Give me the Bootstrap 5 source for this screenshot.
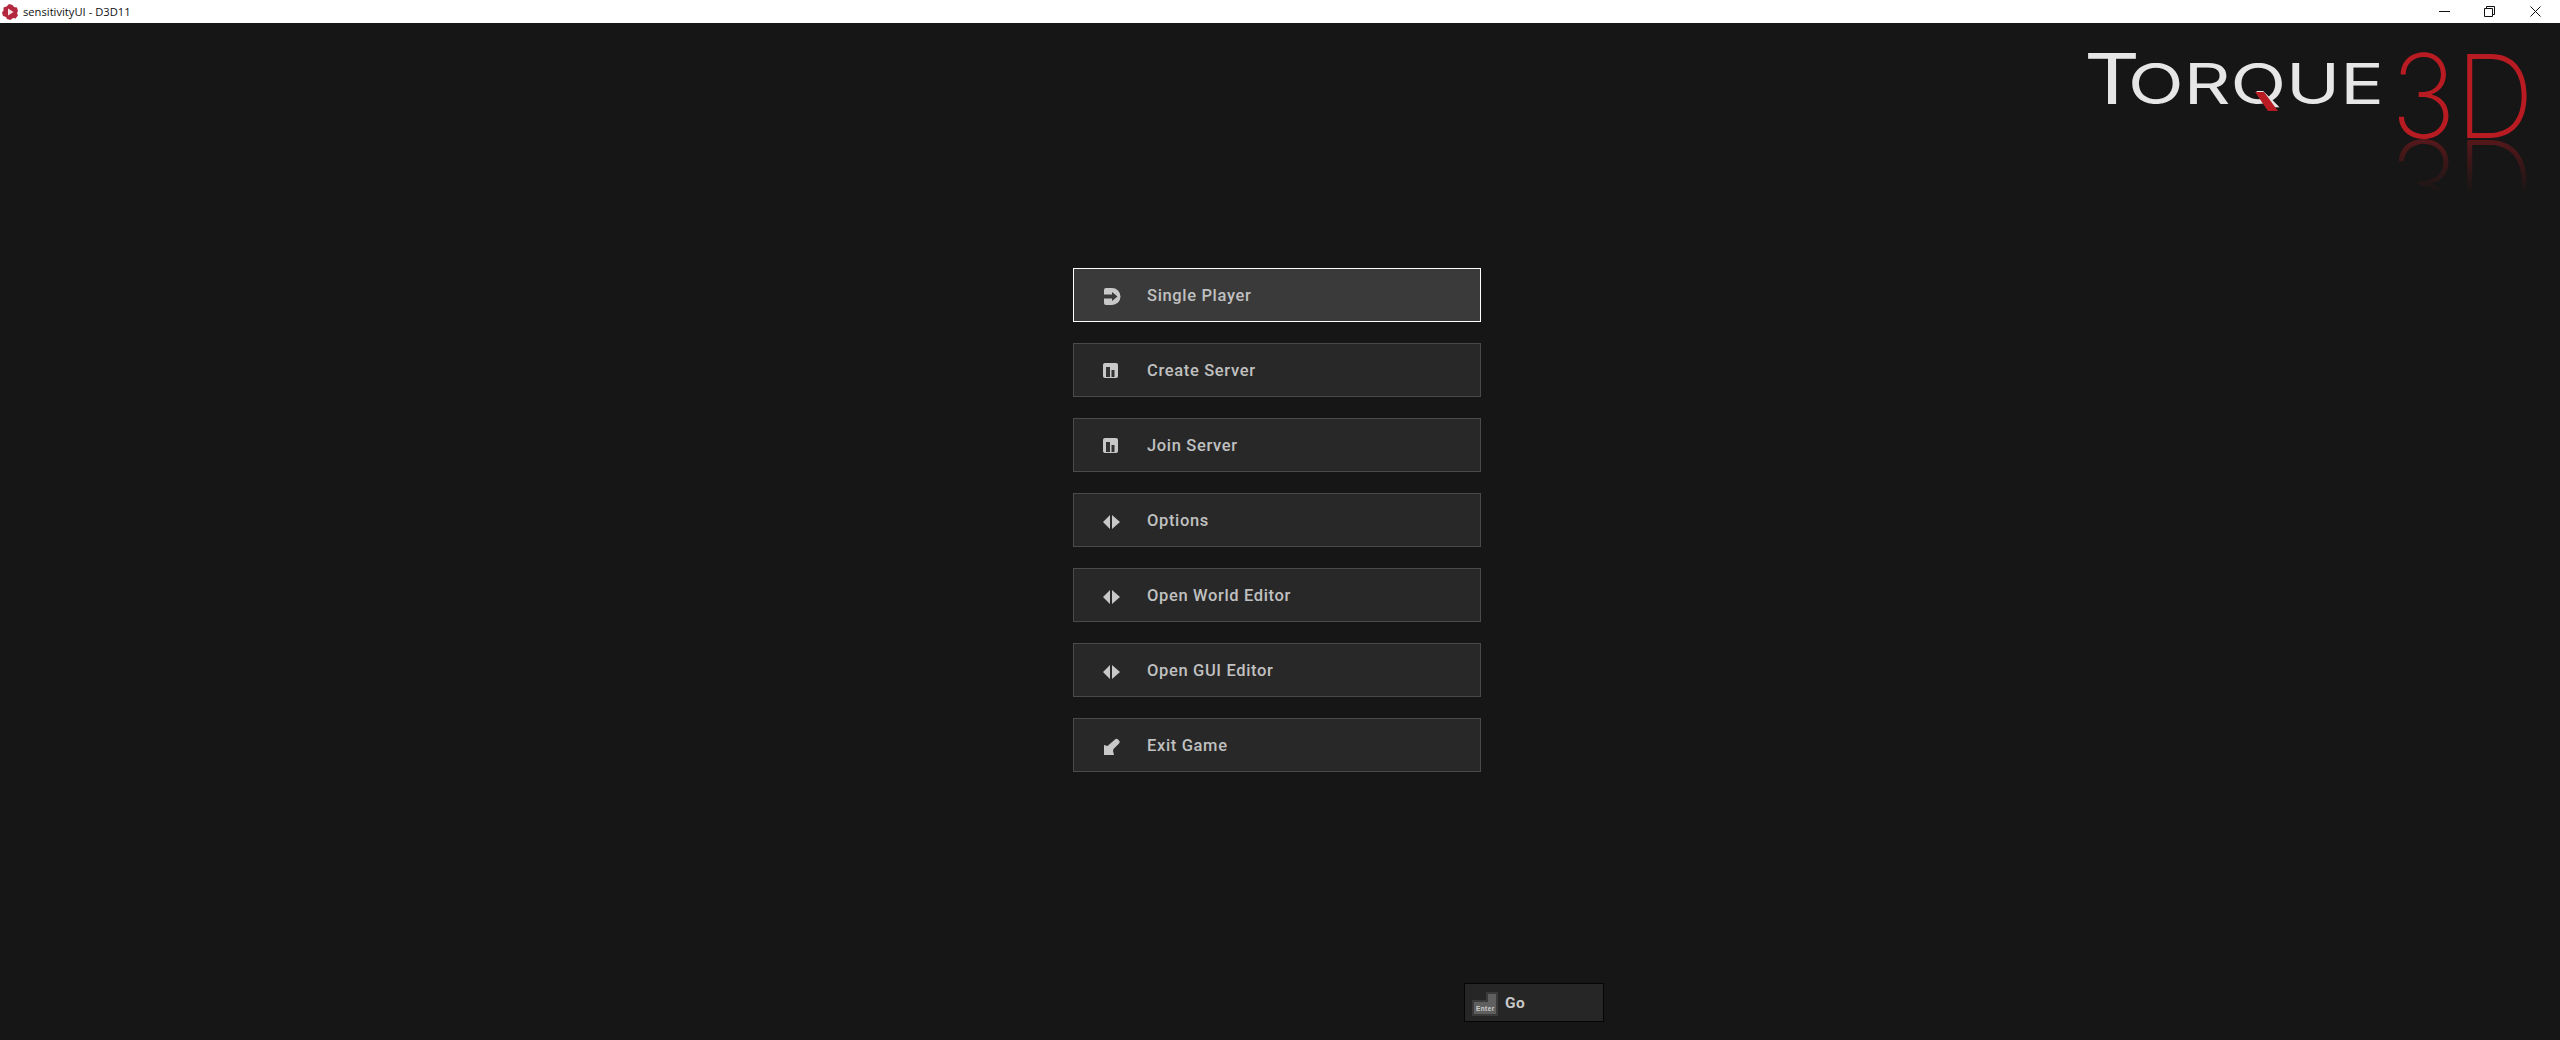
<!DOCTYPE html>
<html lang="en">
<head>
<meta charset="utf-8">
<title>sensitivityUI - D3D11</title>
<link href="https://cdn.jsdelivr.net/npm/bootstrap@5.3.0/dist/css/bootstrap.min.css" rel="stylesheet">
<style>
html,body{height:100%}
body{background:#161616;overflow:hidden;font-family:"Liberation Sans",Arial,sans-serif}
.win-bar{height:23px;background:#fff;color:#111;font:11.2px/23px "Open Sans","Liberation Sans",sans-serif;padding:0 2px}
.win-title{margin-left:4px;margin-top:-1px}
.win-ctl{width:45.5px;height:23px}
.stage{height:1017px}
.logo-art{position:absolute;top:0;right:0;padding-right:19px}
.logo-word{display:block;width:310px;height:110px}
.logo-num{display:block;width:150px;height:116px;margin-left:1px;overflow:visible;-webkit-box-reflect:below 0 linear-gradient(transparent 52%,rgba(255,255,255,.4))}
.menu-col{width:408px;margin-left:1073px;padding-top:245px;gap:21px}
.menu-btn.btn{height:54px;width:408px;background:#282828;border:1px solid #4a4a4a;border-radius:0;color:#c0c0c0;padding:2px 0 0 29px;font:500 16.5px/1 Roboto,"Liberation Sans",sans-serif;letter-spacing:.65px;text-align:left}
.menu-btn.btn.is-active{background:#3a3a3a;border-color:#fff}
.menu-ico{width:20px;height:20px;margin:2px 24px 0 0;flex:none}
.go-wrap{padding-left:1464px;padding-bottom:18px}
.go-btn.btn{width:140px;height:39px;background:#262626;border:1px solid #050505;border-radius:0;color:#c8c8c8;padding:2px 0 0 6px;font:700 15.5px/1 Roboto,"Liberation Sans",sans-serif;letter-spacing:.5px}
.key-ico{width:28px;height:26px;margin-right:6px;flex:none}
.key-lbl{font:700 6.5px "Liberation Sans",sans-serif;fill:#cfcfcf;letter-spacing:.4px}
.lg-torque{font-family:Inter,"Liberation Sans",sans-serif;font-weight:400;fill:#e6e6e6}
.lg-3d{font-family:Inter,"Liberation Sans",sans-serif;font-weight:240;fill:#b81c22}
</style>
</head>
<body class="d-flex flex-column">
<header class="win-bar d-flex align-items-center">
  <svg width="17" height="16" viewBox="0 0 17 16"><path d="M7 0l3.500 1 1.500 2 3 .5 1 3.500-1 2 1 2.500-2.500 3-2.500-.5-2.500 2-3.500-1-1-2-3-1L0 8.500 1.500 6.500 1.500 3.500 4.500 2.500z" fill="#b4283f"/><path d="M6 4.500l5.500 3.500-5.500 3.500z" fill="#f3e3e6"/></svg>
  <span class="win-title">sensitivityUI - D3D11</span>
  <div class="d-flex ms-auto">
    <div class="win-ctl d-flex align-items-center justify-content-center"><svg width="11" height="11" viewBox="0 0 11 11"><path d="M0 5.500h11" stroke="#111"/></svg></div>
    <div class="win-ctl d-flex align-items-center justify-content-center"><svg width="11" height="11" viewBox="0 0 11 11" fill="none" stroke="#111"><path d="M.5 2.500h8v8h-8z"/><path d="M2.500 2.500v-2h8v8h-2"/></svg></div>
    <div class="win-ctl d-flex align-items-center justify-content-center"><svg width="11" height="11" viewBox="0 0 11 11"><path d="M.5.500l10 10M10.500.500l-10 10" stroke="#111"/></svg></div>
  </div>
</header>
<main class="stage position-relative d-flex flex-column">
  <div class="logo-art d-flex">
    <svg class="logo-word" viewBox="-10 0 310 110">
      <text class="lg-torque" x="-6" y="81" font-size="70" textLength="56" lengthAdjust="spacingAndGlyphs">T</text>
      <text class="lg-torque" x="38" y="81" font-size="56" textLength="256" lengthAdjust="spacingAndGlyphs">ORQUE</text>
      <polygon points="165,69 174,69 188,88 178,88" fill="#b81c22"/>
    </svg>
    <svg class="logo-num" viewBox="0 0 150 116">
      <text class="lg-3d" x="0" y="115" font-size="116" textLength="143" lengthAdjust="spacingAndGlyphs">3D</text>
    </svg>
  </div>
  <nav class="menu-col d-flex flex-column">
    <button class="menu-btn is-active btn d-flex align-items-center"><svg class="menu-ico" viewBox="0 0 20 20"><path d="M3 1h6a8.500 8.500 0 0 1 0 17H3a2 2 0 0 1-2-2V3a2 2 0 0 1 2-2z" fill="#c8c8c8"/><path d="M0 7.500h9V5l5.500 4.500L9 14v-2.500H0z" fill="#3a3a3a"/></svg>Single Player</button>
    <button class="menu-btn btn d-flex align-items-center"><svg class="menu-ico" viewBox="0 0 20 20"><rect y="1" width="15" height="15" rx="2" fill="#c8c8c8"/><path d="M3 5h4v10H3zM8.500 8h3v7h-3z" fill="#333"/></svg>Create Server</button>
    <button class="menu-btn btn d-flex align-items-center"><svg class="menu-ico" viewBox="0 0 20 20"><rect y="1" width="15" height="15" rx="2" fill="#c8c8c8"/><path d="M3 5h4v10H3zM8.500 8h3v7h-3z" fill="#333"/></svg>Join Server</button>
    <button class="menu-btn btn d-flex align-items-center"><svg class="menu-ico" viewBox="0 0 20 20"><path d="M7 3v14L0 10zM9 3v14l8-7z" fill="#c8c8c8"/></svg>Options</button>
    <button class="menu-btn btn d-flex align-items-center"><svg class="menu-ico" viewBox="0 0 20 20"><path d="M7 3v14L0 10zM9 3v14l8-7z" fill="#c8c8c8"/></svg>Open World Editor</button>
    <button class="menu-btn btn d-flex align-items-center"><svg class="menu-ico" viewBox="0 0 20 20"><path d="M7 3v14L0 10zM9 3v14l8-7z" fill="#c8c8c8"/></svg>Open GUI Editor</button>
    <button class="menu-btn btn d-flex align-items-center"><svg class="menu-ico" viewBox="0 0 20 20"><path d="M12 2.500a2 2 0 0 1 3 0l1 1a2 2 0 0 1 0 3L10.500 12l-.5 2 1 4H1V8l3.500 1z" fill="#c8c8c8"/></svg>Exit Game</button>
  </nav>
  <footer class="go-wrap mt-auto">
    <button class="go-btn btn d-flex align-items-center"><svg class="key-ico" viewBox="0 0 28 26"><path d="M15 1h12v24H1V9h14z" fill="#3a3a3a"/><path d="M17 3h8v20H3V11h14z" fill="#5f5f5f"/><text class="key-lbl" x="5" y="20">Enter</text></svg>Go</button>
  </footer>
</main>
</body>
</html>
